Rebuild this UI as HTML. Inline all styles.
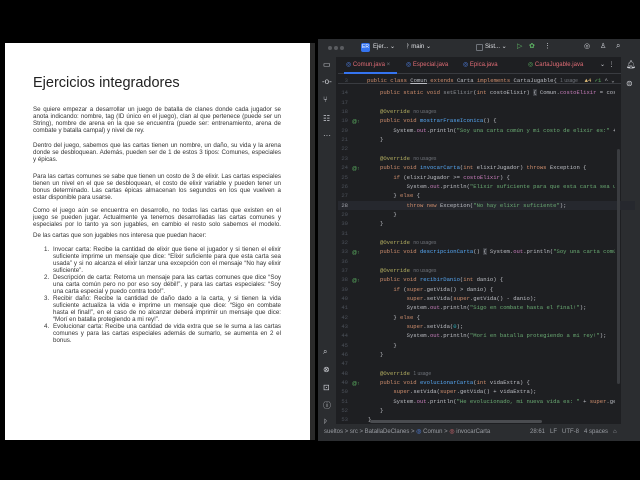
<!DOCTYPE html>
<html><head><meta charset="utf-8">
<style>
*{margin:0;padding:0;box-sizing:border-box}
body{width:640px;height:480px;background:#000;position:relative;overflow:hidden;font-family:"Liberation Sans",sans-serif}
#doc{position:absolute;left:5px;top:43px;width:310px;height:397px;background:#fff;border-right:5px solid #2a2a2a}
#doc .t{position:absolute;left:28px;top:32px;font-size:14.5px;color:#222;white-space:nowrap}
.l{position:absolute;font-size:6.2px;color:#333;white-space:nowrap;line-height:7px;height:7px}
.j{text-align:justify;text-align-last:justify;white-space:normal;overflow:hidden}
#ide{position:absolute;left:318px;top:39px;width:322px;height:402px;background:#1e1f22;font-family:"Liberation Sans",sans-serif;overflow:hidden}
.tb{position:absolute;left:0;top:0;width:322px;height:18px;background:#2b2d30}
.side{position:absolute;left:0;top:18px;width:19px;height:367px;background:#2b2d30;border-right:1px solid #1e1f22}
.rside{position:absolute;left:303px;top:18px;width:19px;height:367px;background:#2b2d30}
.tabs{position:absolute;left:20px;top:18px;width:283px;height:17px;border-bottom:1px solid #393b40}
.st{position:absolute;left:0;top:385px;width:322px;height:17px;background:#2b2d30;font-size:6px;color:#9a9da3;line-height:17px;white-space:nowrap}
.c{position:absolute;left:0;font-family:"Liberation Mono",monospace;font-size:5.55px;color:#bcbec4;white-space:pre;height:9.3px;line-height:9.3px;width:297px;overflow:hidden}
.c .n{position:absolute;left:20px;width:10px;text-align:right;color:#4b5059}
.c .x{position:absolute;left:62px}
.k{color:#cf8e6d}.s{color:#6aab73}.m{color:#56a8f5}.a{color:#b3ae60}.f{color:#c77dbb}.h{color:#6f737a;font-family:"Liberation Sans",sans-serif;font-size:5px}
.ic{position:absolute;color:#ced0d6;font-size:8px}
.g{position:absolute;left:34px;font-size:5px;color:#5fb865}
</style></head><body>
<div id="doc">
<div class="t">Ejercicios integradores</div>
<div class="l j" style="left:28px;top:63px;width:248px">Se quiere empezar a desarrollar un juego de batalla de clanes donde cada jugador se</div>
<div class="l j" style="left:28px;top:70px;width:248px">anota indicando: nombre, tag (ID único en el juego), clan al que pertenece (puede ser un</div>
<div class="l j" style="left:28px;top:77px;width:248px">String), nombre de arena en la que se encuentra (puede ser: entrenamiento, arena de</div>
<div class="l" style="left:28px;top:84px">combate y batalla campal) y nivel de rey.</div>
<div class="l j" style="left:28px;top:99px;width:248px">Dentro del juego, sabemos que las cartas tienen un nombre, un daño, su vida y la arena</div>
<div class="l j" style="left:28px;top:106px;width:248px">donde se desbloquean. Además, pueden ser de 1 de estos 3 tipos: Comunes, especiales</div>
<div class="l" style="left:28px;top:113px">y épicas.</div>
<div class="l j" style="left:28px;top:130px;width:248px">Para las cartas comunes se sabe que tienen un costo de 3 de elixir. Las cartas especiales</div>
<div class="l j" style="left:28px;top:137px;width:248px">tienen un nivel en el que se desbloquean, el costo de elixir variable y pueden tener un</div>
<div class="l j" style="left:28px;top:144px;width:248px">bonus determinado. Las cartas épicas almacenan los segundos en los que vuelven a</div>
<div class="l" style="left:28px;top:151px">estar disponible para usarse.</div>
<div class="l j" style="left:28px;top:164px;width:248px">Como el juego aún se encuentra en desarrollo, no todas las cartas que existen en el</div>
<div class="l j" style="left:28px;top:171px;width:248px">juego se pueden jugar. Actualmente ya tenemos desarrolladas las cartas comunes y</div>
<div class="l j" style="left:28px;top:178px;width:248px">especiales por lo tanto ya son jugables, en cambio el resto solo sabemos el modelo.</div>
<div class="l" style="left:28px;top:189px">De las cartas que son jugables nos interesa que puedan hacer:</div>
<div class="l" style="left:39px;top:203px">1.</div>
<div class="l j" style="left:48px;top:203px;width:228px">Invocar carta: Recibe la cantidad de elixir que tiene el jugador y si tienen el elixir</div>
<div class="l j" style="left:48px;top:210px;width:228px">suficiente imprime un mensaje que dice: “Elixir suficiente para que esta carta sea</div>
<div class="l j" style="left:48px;top:217px;width:228px">usada” y si no alcanza el elixir lanzar una excepción con el mensaje “No hay elixir</div>
<div class="l" style="left:48px;top:224px">suficiente”.</div>
<div class="l" style="left:39px;top:231px">2.</div>
<div class="l j" style="left:48px;top:231px;width:228px">Descripción de carta: Retorna un mensaje para las cartas comunes que dice “Soy</div>
<div class="l j" style="left:48px;top:238px;width:228px">una carta común pero no por eso soy débil!”, y para las cartas especiales: “Soy</div>
<div class="l" style="left:48px;top:245px">una carta especial y puedo contra todo!”.</div>
<div class="l" style="left:39px;top:252px">3.</div>
<div class="l j" style="left:48px;top:252px;width:228px">Recibir daño: Recibe la cantidad de daño dado a la carta, y si tienen la vida</div>
<div class="l j" style="left:48px;top:259px;width:228px">suficiente actualiza la vida e imprime un mensaje que dice: “Sigo en combate</div>
<div class="l j" style="left:48px;top:266px;width:228px">hasta el final!”, en el caso de no alcanzar deberá imprimir un mensaje que dice:</div>
<div class="l" style="left:48px;top:273px">“Morí en batalla protegiendo a mi rey!”.</div>
<div class="l" style="left:39px;top:280px">4.</div>
<div class="l j" style="left:48px;top:280px;width:228px">Evolucionar carta: Recibe una cantidad de vida extra que se le suma a las cartas</div>
<div class="l j" style="left:48px;top:287px;width:228px">comunes y para las cartas especiales además de sumarlo, se aumenta en 2 el</div>
<div class="l" style="left:48px;top:294px">bonus.</div>
</div>

<div id="ide">
<div class="tb">
 <div style="position:absolute;left:10px;top:7px;width:4px;height:4px;border-radius:50%;background:#5a5c60"></div>
 <div style="position:absolute;left:16px;top:7px;width:4px;height:4px;border-radius:50%;background:#5a5c60"></div>
 <div style="position:absolute;left:22px;top:7px;width:4px;height:4px;border-radius:50%;background:#5a5c60"></div>
 <div style="position:absolute;left:43px;top:4px;width:9px;height:9px;border-radius:2px;background:#3574f0;color:#fff;font-size:5px;line-height:9px;text-align:center">ER</div>
 <div style="position:absolute;left:55px;top:4px;font-size:6px;color:#dfe1e5">Ejer... ⌄</div>
 <div style="position:absolute;left:88px;top:4px;font-size:6px;color:#dfe1e5">ᚹ main ⌄</div>
 <div style="position:absolute;left:158px;top:5px;width:7px;height:7px;border:1px solid #6f737a;border-radius:1px"></div>
 <div style="position:absolute;left:167px;top:4px;font-size:6px;color:#dfe1e5">Sist... ⌄</div>
 <div style="position:absolute;left:199px;top:3px;font-size:7px;color:#5fb865">▷</div>
 <div style="position:absolute;left:211px;top:3px;font-size:7px;color:#5fb865">✿</div>
 <div style="position:absolute;left:226px;top:3px;font-size:7px;color:#ced0d6">⋮</div>
 <div style="position:absolute;left:266px;top:3px;font-size:7px;color:#ced0d6">◎</div>
 <div style="position:absolute;left:282px;top:3px;font-size:7px;color:#ced0d6">♙</div>
 <div style="position:absolute;left:298px;top:2px;font-size:8px;color:#ced0d6">⌕</div>
</div>
<div class="side">
 <div class="ic" style="left:5px;top:3px">▭</div>
 <div class="ic" style="left:4px;top:20px">-o-</div>
 <div class="ic" style="left:5px;top:38px">⑂</div>
 <div class="ic" style="left:5px;top:57px">☷</div>
 <div class="ic" style="left:5px;top:74px">···</div>
 <div class="ic" style="left:5px;top:290px">⌕</div>
 <div class="ic" style="left:5px;top:308px">⊗</div>
 <div class="ic" style="left:5px;top:326px">⊡</div>
 <div class="ic" style="left:5px;top:343px">ⓘ</div>
 <div class="ic" style="left:5px;top:361px">ᚹ</div>
</div>
<div class="rside">
 <div class="ic" style="left:5px;top:3px">🔔︎</div>
 <div class="ic" style="left:5px;top:22px">⊜</div>
</div>
<div class="tabs">
 <div style="position:absolute;left:8px;top:4px;font-size:6px;color:#e06c75;white-space:nowrap"><span style="color:#548af7">◎</span> Comun.java <span style="color:#6f737a">×</span></div>
 <div style="position:absolute;left:6px;top:15px;width:53px;height:2px;background:#3574f0"></div>
 <div style="position:absolute;left:68px;top:4px;font-size:6px;color:#e06c75;white-space:nowrap"><span style="color:#548af7">◎</span> Especial.java</div>
 <div style="position:absolute;left:125px;top:4px;font-size:6px;color:#e06c75;white-space:nowrap"><span style="color:#548af7">◎</span> Epica.java</div>
 <div style="position:absolute;left:190px;top:4px;font-size:6px;color:#e06c75;white-space:nowrap"><span style="color:#5fb865">◎</span> CartaJugable.java</div>
 <div style="position:absolute;left:262px;top:4px;font-size:6px;color:#ced0d6">⌄ &nbsp;⋮</div>
</div>
<!-- code -->
<div style="position:absolute;left:20px;top:36px;width:283px;height:9px;border-bottom:1px solid #393b40"></div>
<div class="c" style="top:37px"><span class="n">3</span><span class="x" style="left:49px"><span class="k">public class</span> <u>Comun</u> <span class="k">extends</span> Carta <span class="k">implements</span> CartaJugable{ <span class="h">1 usage</span>  <span style="color:#e5c07b">▲4</span> <span style="color:#5fb865">✓1</span> ^ ⌄</span></div>
<div class="c" style="top:49.4px"><span class="n">14</span><span class="x"><span class="k">public static void</span> <span style="color:#8a8d93">setElixir</span>(<span class="k">int</span> costoElixir) <span style="background:#393b40">{</span> Comun.<span class="f">costoElixir</span> = costoElixir</span></div>
<div class="c" style="top:58.7px"><span class="n">17</span></div>
<div class="c" style="top:68.1px"><span class="n">18</span><span class="x"><span class="a">@Override</span> <span class="h">no usages</span></span></div>
<div class="c" style="top:77.4px"><span class="n">19</span><span class="x"><span class="k">public void</span> <span class="m">mostrarFraseIconica</span>() {</span></div>
<div class="c" style="top:86.8px"><span class="n">20</span><span class="x">    System.<span class="f">out</span>.println(<span class="s">"Soy una carta común y mi costo de elixir es:"</span> + <span class="f">costoElixir</span></span></div>
<div class="c" style="top:96.1px"><span class="n">21</span><span class="x">}</span></div>
<div class="c" style="top:105.4px"><span class="n">22</span></div>
<div class="c" style="top:114.8px"><span class="n">23</span><span class="x"><span class="a">@Override</span> <span class="h">no usages</span></span></div>
<div class="c" style="top:124.1px"><span class="n">24</span><span class="x"><span class="k">public void</span> <span class="m">invocarCarta</span>(<span class="k">int</span> elixirJugador) <span class="k">throws</span> Exception {</span></div>
<div class="c" style="top:133.5px"><span class="n">25</span><span class="x">    <span class="k">if</span> (elixirJugador &gt;= <span class="f">costoElixir</span>) {</span></div>
<div class="c" style="top:142.8px"><span class="n">26</span><span class="x">        System.<span class="f">out</span>.println(<span class="s">"Elixir suficiente para que esta carta sea usada"</span>);</span></div>
<div class="c" style="top:152.1px"><span class="n">27</span><span class="x">    } <span class="k">else</span> {</span></div>
<div class="c" style="top:161.5px;background:#26282e;left:20px"><span class="n" style="left:0;color:#a1a3ab">28</span><span class="x" style="left:42px">        <span class="k">throw new</span> Exception(<span class="s">"No hay elixir suficiente"</span>);</span></div>
<div class="c" style="top:170.8px"><span class="n">29</span><span class="x">    }</span></div>
<div class="c" style="top:180.2px"><span class="n">30</span><span class="x">}</span></div>
<div class="c" style="top:189.5px"><span class="n">31</span></div>
<div class="c" style="top:198.8px"><span class="n">32</span><span class="x"><span class="a">@Override</span> <span class="h">no usages</span></span></div>
<div class="c" style="top:208.2px"><span class="n">33</span><span class="x"><span class="k">public void</span> <span class="m">descripcionCarta</span>() <span style="background:#393b40">{</span> System.<span class="f">out</span>.println(<span class="s">"Soy una carta común pero</span></span></div>
<div class="c" style="top:217.5px"><span class="n">36</span></div>
<div class="c" style="top:226.9px"><span class="n">37</span><span class="x"><span class="a">@Override</span> <span class="h">no usages</span></span></div>
<div class="c" style="top:236.2px"><span class="n">38</span><span class="x"><span class="k">public void</span> <span class="m">recibirDanio</span>(<span class="k">int</span> danio) {</span></div>
<div class="c" style="top:245.5px"><span class="n">39</span><span class="x">    <span class="k">if</span> (<span class="k">super</span>.getVida() &gt; danio) {</span></div>
<div class="c" style="top:254.9px"><span class="n">40</span><span class="x">        <span class="k">super</span>.setVida(<span class="k">super</span>.getVida() - danio);</span></div>
<div class="c" style="top:264.2px"><span class="n">41</span><span class="x">        System.<span class="f">out</span>.println(<span class="s">"Sigo en combate hasta el final!"</span>);</span></div>
<div class="c" style="top:273.6px"><span class="n">42</span><span class="x">    } <span class="k">else</span> {</span></div>
<div class="c" style="top:282.9px"><span class="n">43</span><span class="x">        <span class="k">super</span>.setVida(<span style="color:#2aacb8">0</span>);</span></div>
<div class="c" style="top:292.2px"><span class="n">44</span><span class="x">        System.<span class="f">out</span>.println(<span class="s">"Morí en batalla protegiendo a mi rey!"</span>);</span></div>
<div class="c" style="top:301.6px"><span class="n">45</span><span class="x">    }</span></div>
<div class="c" style="top:310.9px"><span class="n">46</span><span class="x">}</span></div>
<div class="c" style="top:320.3px"><span class="n">47</span></div>
<div class="c" style="top:329.6px"><span class="n">48</span><span class="x"><span class="a">@Override</span> <span class="h">1 usage</span></span></div>
<div class="c" style="top:338.9px"><span class="n">49</span><span class="x"><span class="k">public void</span> <span class="m">evolucionarCarta</span>(<span class="k">int</span> vidaExtra) {</span></div>
<div class="c" style="top:348.3px"><span class="n">50</span><span class="x">    <span class="k">super</span>.setVida(<span class="k">super</span>.getVida() + vidaExtra);</span></div>
<div class="c" style="top:357.6px"><span class="n">51</span><span class="x">    System.<span class="f">out</span>.println(<span class="s">"He evolucionado, mi nueva vida es: "</span> + <span class="k">super</span>.getVida</span></div>
<div class="c" style="top:367px"><span class="n">52</span><span class="x">}</span></div>
<div class="c" style="top:376.3px"><span class="n">53</span><span class="x" style="left:50px">}</span></div>
<div class="g" style="top:80px">@↑</div>
<div class="g" style="top:127px">@↑</div>
<div class="g" style="top:211px">@↑</div>
<div class="g" style="top:239px">@↑</div>
<div class="g" style="top:342px">@↑</div>
<div style="position:absolute;left:299px;top:110px;width:3px;height:235px;background:#3a3c40;border-radius:2px"></div>
<div style="position:absolute;left:52px;top:381px;width:172px;height:3px;background:#4a4c50;border-radius:2px"></div>
<div class="st">
 <span style="position:absolute;left:6px">sueltos &gt; src &gt; BatallaDeClanes &gt; <span style="color:#548af7">◎</span> Comun &gt; <span style="color:#e06c75">◎</span> invocarCarta</span>
 <span style="position:absolute;left:212px">28:61 &nbsp; LF &nbsp; UTF-8 &nbsp; 4 spaces &nbsp; ⌂</span>
</div>
</div>
</body></html>
